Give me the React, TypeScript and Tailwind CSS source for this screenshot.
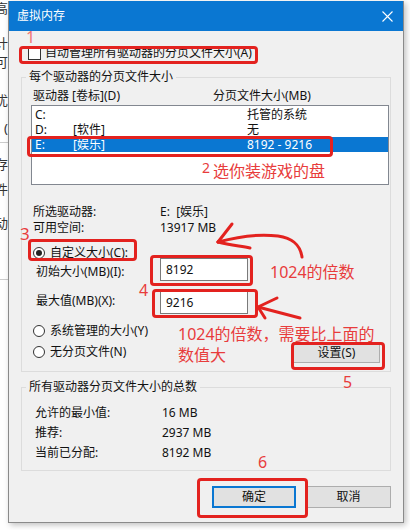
import React from "react";

const sys = "font-['Noto_Sans','Noto_Sans_CJK_SC',sans-serif] text-[12px] leading-[16px] text-[#111]";

function Radio({ on, label }: { on?: boolean; label: string }) {
  return (
    <div className="flex items-center gap-[5px] h-[16px]">
      <span className="w-[12px] h-[12px] rounded-full border border-[#333] bg-white flex items-center justify-center">
        {on && <span className="w-[6px] h-[6px] rounded-full bg-[#222]" />}
      </span>
      <span>{label}</span>
    </div>
  );
}

function RedBox({ className }: { className: string }) {
  return <div className={"absolute border-[3px] border-[#e3221f] rounded-[4px] " + className} />;
}

export default function App() {
  return (
    <div className={"relative w-[410px] h-[530px] bg-white overflow-hidden flex " + sys}>
      {/* window behind, only a sliver shows */}
      <div className="w-[8px] shrink-0 flex flex-col overflow-hidden text-[#333] text-[13px]">
        <div className="flex justify-end h-[18px] whitespace-nowrap">高</div>
        <div className="flex justify-end h-[18px] mt-[17px] whitespace-nowrap">计</div>
        <div className="flex justify-end h-[18px] mt-[1px] whitespace-nowrap">可</div>
        <div className="flex justify-end h-[18px] mt-[20px] whitespace-nowrap">优</div>
        <div className="flex justify-end h-[18px] mt-[10px] whitespace-nowrap">(</div>
        <div className="h-px bg-[#ccc] mt-[4px]" />
        <div className="flex justify-end h-[18px] mt-[13px] whitespace-nowrap">存</div>
        <div className="flex justify-end h-[18px] mt-[7px] whitespace-nowrap">件</div>
        <div className="flex justify-end h-[18px] mt-[16px] whitespace-nowrap">动</div>
        <div className="h-px bg-[#ccc] mt-[46px]" />
      </div>

      {/* dialog */}
      <div className="w-[396px] shrink-0 mt-[1px] self-start flex flex-col bg-[#f0f0f0] border-x border-b border-[#8a8a8a] shadow-[2px_2px_6px_rgba(0,0,0,0.25)]">
        <div className="h-[30px] bg-[#0a77d2] flex items-center pl-[8px] pr-[10px] text-white">
          <span>虚拟内存</span>
          <svg className="ml-auto" width="11" height="11" viewBox="0 0 11 11">
            <path d="M0.5 0.5 L10.5 10.5 M10.5 0.5 L0.5 10.5" stroke="#fff" strokeWidth="1.1" />
          </svg>
        </div>

        <div className="flex flex-col px-[12px] pt-[14px] pb-[14px]">
          <div className="flex items-center h-[16px] pl-[7px] gap-[4px]">
            <span className="w-[13px] h-[13px] border border-[#333] bg-white" />
            <span>自动管理所有驱动器的分页文件大小(A)</span>
          </div>

          <fieldset className="mt-[8px] border border-[#dcdcdc] w-[370px] p-0 pb-[8px]">
            <legend className="ml-[4px] px-[3px]">每个驱动器的分页文件大小</legend>
            <div className="flex mt-[3px] pl-[11px] h-[16px]">
              <span className="w-[180px]">驱动器 [卷标](D)</span>
              <span>分页文件大小(MB)</span>
            </div>
            <div className="ml-[9px] mr-[1px] mt-[1px] h-[80px] bg-white border border-[#828790] pt-[1px] leading-[15px]">
              <div className="flex h-[15px] items-center pl-[3px]">
                <span className="w-[38px]">C:</span>
                <span className="w-[174px]"></span>
                <span>托管的系统</span>
              </div>
              <div className="flex h-[15px] items-center pl-[3px]">
                <span className="w-[38px]">D:</span>
                <span className="w-[174px]">[软件]</span>
                <span>无</span>
              </div>
              <div className="flex h-[15px] items-center pl-[3px] bg-[#0a77d2] text-white">
                <span className="w-[38px]">E:</span>
                <span className="w-[174px]">[娱乐]</span>
                <span>8192 - 9216</span>
              </div>
            </div>

            <div className="flex pl-[11px] mt-[19px] h-[16px]">
              <span className="w-[127px]">所选驱动器:</span>
              <span>E:&nbsp;&nbsp;[娱乐]</span>
            </div>
            <div className="flex pl-[11px] h-[16px]">
              <span className="w-[127px]">可用空间:</span>
              <span>13917 MB</span>
            </div>

            <div className="pl-[11px] mt-[9px]">
              <Radio on label="自定义大小(C):" />
            </div>
            <div className="flex pl-[14px] mt-[-3px] items-start">
              <span className="w-[124px] pt-[6px]">初始大小(MB)(I):</span>
              <div className="w-[88px] h-[23px] bg-white border border-[#7a7a7a] flex items-center pl-[5px]">8192</div>
            </div>
            <div className="flex pl-[14px] mt-[10px] items-start">
              <span className="w-[124px] pt-[2px]">最大值(MB)(X):</span>
              <div className="w-[88px] h-[23px] bg-white border border-[#7a7a7a] flex items-center pl-[5px]">9216</div>
            </div>

            <div className="flex items-start pl-[11px] pr-[10px] mt-[9px]">
              <div className="flex flex-col gap-[5px]">
                <Radio label="系统管理的大小(Y)" />
                <Radio label="无分页文件(N)" />
              </div>
              <div className="ml-auto mt-[19px] w-[87px] h-[21px] bg-[#e1e1e1] border border-[#adadad] flex items-center justify-center">
                设置(S)
              </div>
            </div>
          </fieldset>

          <fieldset className="mt-[7px] border border-[#dcdcdc] w-[370px] p-0 pb-[7px]">
            <legend className="ml-[4px] px-[3px]">所有驱动器分页文件大小的总数</legend>
            <div className="flex flex-col pl-[13px] mt-[8px]">
              <div className="flex h-[20px] items-center">
                <span className="w-[127px]">允许的最小值:</span>
                <span>16 MB</span>
              </div>
              <div className="flex h-[20px] items-center">
                <span className="w-[127px]">推荐:</span>
                <span>2937 MB</span>
              </div>
              <div className="flex h-[20px] items-center">
                <span className="w-[127px]">当前已分配:</span>
                <span>8192 MB</span>
              </div>
            </div>
          </fieldset>

          <div className="flex justify-end gap-[10px] mt-[15px]">
            <div className="w-[84px] h-[22px] bg-[#e1e1e1] border-2 border-[#0a77d2] flex items-center justify-center">确定</div>
            <div className="w-[85px] h-[22px] bg-[#e1e1e1] border border-[#adadad] flex items-center justify-center">取消</div>
          </div>
        </div>
      </div>

      {/* annotations drawn over the screenshot */}
      <div className="absolute inset-0 pointer-events-none font-['Noto_Sans','Noto_Sans_CJK_SC',sans-serif] text-[#e83c3c] text-[16px] leading-[20px]">
        <RedBox className="left-[19px] top-[46px] w-[239px] h-[18px]" />
        <RedBox className="left-[27px] top-[136px] w-[306px] h-[21px]" />
        <RedBox className="left-[28px] top-[239px] w-[109px] h-[22px]" />
        <RedBox className="left-[150px] top-[255px] w-[103px] h-[31px]" />
        <RedBox className="left-[152px] top-[289px] w-[106px] h-[29px]" />
        <RedBox className="left-[291px] top-[342px] w-[94px] h-[28px]" />
        <RedBox className="left-[197px] top-[478px] w-[111px] h-[40px]" />

        <span className="absolute left-[26px] top-[27px] text-[#f07575]">1</span>
        <span className="absolute left-[202px] top-[158px] text-[14px]">2</span>
        <span className="absolute left-[213px] top-[161px]">选你装游戏的盘</span>
        <span className="absolute left-[20px] top-[224px] text-[17px]">3</span>
        <span className="absolute left-[270px] top-[262px]">1024的倍数</span>
        <span className="absolute left-[139px] top-[280px]">4</span>
        <span className="absolute left-[178px] top-[324px] leading-[21px]">
          1024的倍数，需要比上面的
          <br />
          数值大
        </span>
        <span className="absolute left-[343px] top-[372px]">5</span>
        <span className="absolute left-[258px] top-[452px]">6</span>

        <svg className="absolute left-0 top-0" width="410" height="530" viewBox="0 0 410 530">
          <g fill="none" stroke="#e3221f" strokeWidth="3" strokeLinecap="round" strokeLinejoin="round">
            <path d="M302 257 C 300 244, 292 238, 278 236 C 262 234, 240 236, 218 242" />
            <path d="M218 242 L 232 224" />
            <path d="M218 242 C 230 245, 240 246, 250 248" />
            <path d="M300 318 L 258 307 L 277 298" />
            <path d="M258 307 L 265 318" />
          </g>
        </svg>
      </div>
    </div>
  );
}
